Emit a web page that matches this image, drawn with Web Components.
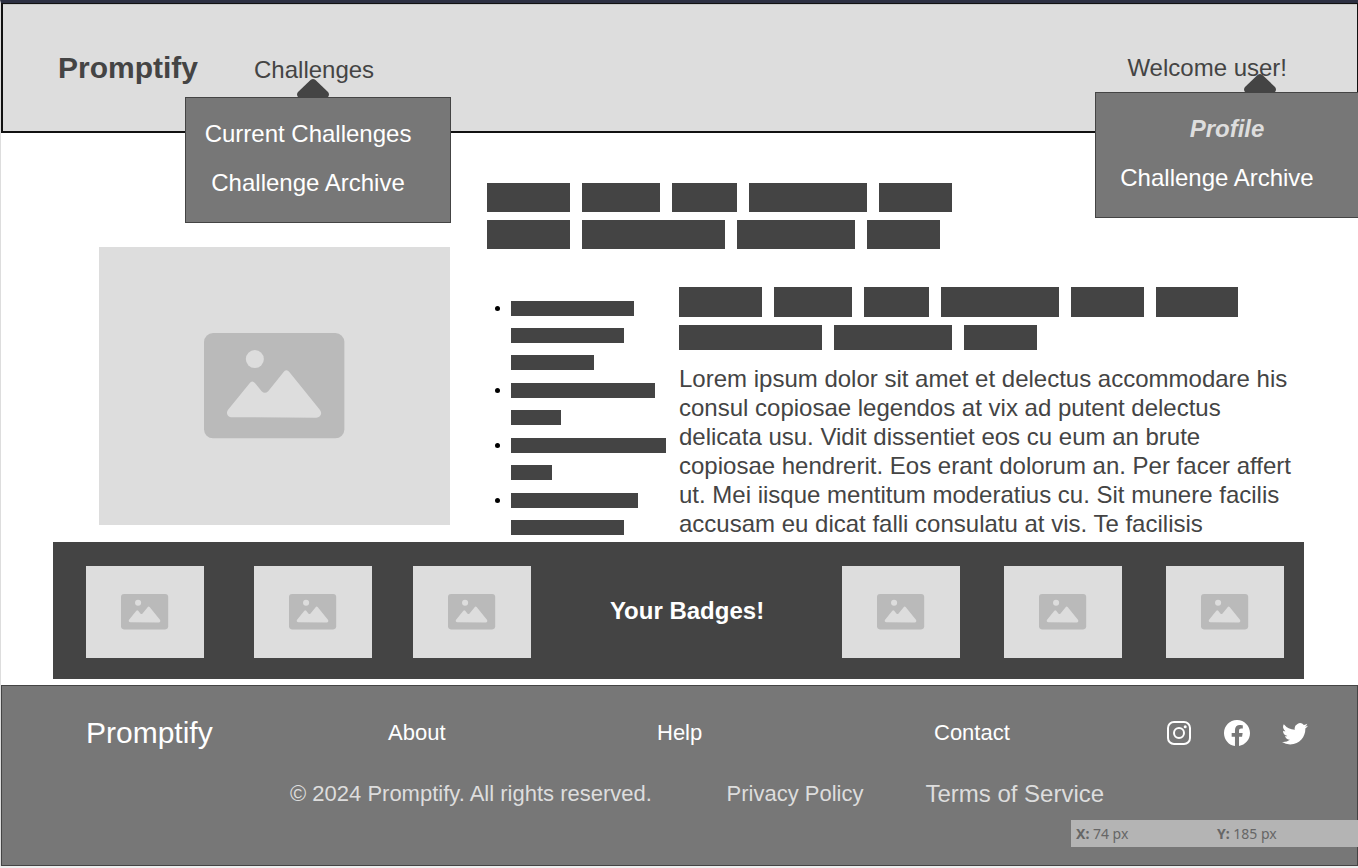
<!DOCTYPE html>
<html lang="en">
<head>
<meta charset="utf-8">
<meta name="viewport" content="width=device-width, initial-scale=1">
<title>Promptify</title>
<style>
  html { background: #eee; }
  body { margin: 0; font-family: "Liberation Sans", Arial, sans-serif; font-size: 24px; line-height: 29px; color: #444; }
</style>
</head>
<body>
<promptify-page></promptify-page>

<script>
const define = (name, markup, setup) => {
  const template = document.createElement('template');
  template.innerHTML = markup;
  customElements.define(name, class extends HTMLElement {
    constructor() {
      super();
      this.attachShadow({ mode: 'open' }).append(template.content.cloneNode(true));
    }
    connectedCallback() { if (setup) setup(this, this.shadowRoot); }
  });
};

/* Grey box with a picture glyph in its middle */
define('image-placeholder', `
  <style>
    :host { display: grid; place-items: center; background: #ddd; }
    svg { display: block; width: 40%; }
  </style>
  <svg viewBox="0 0 140 105" role="img" aria-label="Image placeholder">
    <rect width="140" height="105" rx="9" fill="#bababa"/>
    <circle cx="50.700" cy="26" r="9" fill="#ddd"/>
    <path fill="#ddd" d="M28 84C23.500 84 21.500 79.500 24 76.500L45.500 50Q48 46.500 51 50L57.500 58Q60.700 61 64 58L79 39.500Q82 35 85.500 39.500L115.500 76.500C118.500 80 116 84.500 112 84.500Z"/>
  </svg>`);

/* One row of blocked-out words; widths="83 78 65" */
define('word-row', `
  <style>
    :host { display: flex; gap: 12px; height: var(--bar, 29px); }
    span { background: #444; }
  </style>`,
  (host, root) => {
    for (const w of host.getAttribute('widths').split(' ')) {
      const bar = document.createElement('span');
      bar.style.width = w + 'px';
      root.append(bar);
    }
  });

/* Pop-up panel with a caret above it */
define('drop-menu', `
  <style>
    :host { display: block; position: absolute; box-sizing: border-box; border: 1px solid #444; background: #777; padding: 21px 0 25px; }
    svg { position: absolute; bottom: 100%; left: var(--caret); width: 32px; height: 18px; margin-bottom: 1px; }
    nav { display: grid; gap: 20px; justify-items: center; }
    ::slotted(a) { color: #fff; text-decoration: none; padding-right: 20px; white-space: nowrap; }
    ::slotted(a[aria-current]) { color: #ddd; font-weight: bold; font-style: italic; padding: 0; }
  </style>
  <svg viewBox="0 0 32 18" aria-hidden="true"><path fill="#444" d="M13.500 1Q16 -1 18.500 1L31 13Q33 15.500 31 18H1Q-1 15.500 1 13Z"/></svg>
  <nav><slot></slot></nav>`);

define('site-header', `
  <style>
    :host { display: block; position: relative; z-index: 1; box-sizing: border-box; height: 130px; padding: 49px 70px 0 55px; background: #ddd; border: 2px solid #111; border-width: 1px 1px 2px 2px; box-shadow: inset 0 1px #c8cac9; }
    .bar { display: flex; align-items: flex-start; justify-content: space-between; }
    .left { display: flex; align-items: baseline; gap: 56px; }
    .link { color: inherit; text-decoration: none; }
    .brand { font-size: 30px; font-weight: bold; }
    .item { position: relative; }
    .challenges { top: 42px; left: -69px; width: 266px; --caret: 111px; }
    .user { top: 88px; right: -1px; width: 263px; border-right: 0; --caret: 148px; }
  </style>
  <div class="bar">
    <div class="left">
      <a class="link brand" href="#">Promptify</a>
      <div class="item">
        <a class="link" href="#challenges">Challenges</a>
        <drop-menu class="challenges">
          <a href="#current">Current Challenges</a>
          <a href="#archive">Challenge Archive</a>
        </drop-menu>
      </div>
    </div>
    <a class="link" href="#user">Welcome user!</a>
  </div>
  <drop-menu class="user">
    <a href="#profile" aria-current="page">Profile</a>
    <a href="#archive">Challenge Archive</a>
  </drop-menu>`);

define('profile-panel', `
  <style>
    :host { display: grid; grid-template-columns: 351fr 817fr; gap: 37px; padding: 50px 54px 0 98px; }
    image-placeholder { margin-top: 64px; aspect-ratio: 351 / 278; align-self: start; }
    .title { display: grid; gap: 8px; }
    .columns { display: grid; grid-template-columns: 192px 1fr; margin-top: 38px; }
    ul { list-style: none; margin: 0; padding: 14px 0 0 24px; display: grid; gap: 13px; align-content: start; }
    li { position: relative; display: grid; gap: 12px; --bar: 15px; }
    li::before { content: ""; position: absolute; left: -16px; top: 5px; width: 5px; height: 5px; border-radius: 50%; background: #000; }
    .large { --bar: 30px; }
    .small { --bar: 25px; }
    p { margin: 14px 0 0; }
  </style>
  <image-placeholder></image-placeholder>
  <div>
    <div class="title">
      <word-row widths="83 78 65 118 73"></word-row>
      <word-row widths="83 143 118 73"></word-row>
    </div>
    <div class="columns">
      <ul>
        <li><word-row widths="123"></word-row><word-row widths="113"></word-row><word-row widths="83"></word-row></li>
        <li><word-row widths="144"></word-row><word-row widths="50"></word-row></li>
        <li><word-row widths="155"></word-row><word-row widths="41"></word-row></li>
        <li><word-row widths="127"></word-row><word-row widths="113"></word-row></li>
      </ul>
      <article>
        <div class="title">
          <word-row class="large" widths="83 78 65 118 73 82"></word-row>
          <word-row class="small" widths="143 118 73"></word-row>
        </div>
        <p>Lorem ipsum dolor sit amet et delectus accommodare his<br>
          consul copiosae legendos at vix ad putent delectus<br>
          delicata usu. Vidit dissentiet eos cu eum an brute<br>
          copiosae hendrerit. Eos erant dolorum an. Per facer affert<br>
          ut. Mei iisque mentitum moderatius cu. Sit munere facilis<br>
          accusam eu dicat falli consulatu at vis. Te facilisis</p>
      </article>
    </div>
  </div>`);

define('badge-strip', `
  <style>
    :host { display: grid; grid-template-columns: 168fr 159fr 119fr 310fr 162fr 162fr 118fr; align-items: center; margin: 4px 54px 6px 52px; padding: 24px 20px 21px 33px; background: #444; color: #fff; }
    image-placeholder { width: 118px; height: 92px; }
    h2 { margin: 0; padding-bottom: 4px; font-size: 24px; text-align: center; }
  </style>
  <image-placeholder></image-placeholder>
  <image-placeholder></image-placeholder>
  <image-placeholder></image-placeholder>
  <h2>Your Badges!</h2>
  <image-placeholder></image-placeholder>
  <image-placeholder></image-placeholder>
  <image-placeholder></image-placeholder>`);

define('site-footer', `
  <style>
    :host { display: block; position: relative; box-sizing: border-box; height: 181px; padding-top: 32px; border: 1px solid #444; background: #777; color: #fff; font-size: 22px; }
    a { color: inherit; text-decoration: none; }
    .links { display: grid; grid-template-columns: 302fr 269fr 277fr 232fr 142fr; align-items: center; padding: 0 49px 0 84px; }
    .brand { font-size: 30px; }
    .social { display: flex; gap: 32px; }
    .social svg { display: block; width: 26px; height: 26px; fill: #fff; }
    .legal { display: grid; grid-template-columns: 437fr 199fr 432fr; align-items: center; padding-left: 288px; margin-top: 32px; color: #ddd; }
    .terms { font-size: 24px; }
    .coords { position: absolute; right: -1px; top: 134px; width: 282px; height: 27px; padding-left: 5px; display: grid; grid-template-columns: 1fr 1fr; align-items: center; background: #b4b4b4; color: #666; font: 14px "Noto Sans", sans-serif; }
  </style>
  <div class="links">
    <a class="brand" href="#">Promptify</a>
    <a href="#about">About</a>
    <a href="#help">Help</a>
    <a href="#contact">Contact</a>
    <div class="social">
      <a href="#instagram" aria-label="Instagram"><svg viewBox="0 0 26 26"><rect x="2" y="2" width="22" height="22" rx="6" fill="none" stroke="#fff" stroke-width="2"/><circle cx="13" cy="13" r="5" fill="none" stroke="#fff" stroke-width="2"/><circle cx="19.200" cy="6.800" r="1.500"/></svg></a>
      <a href="#facebook" aria-label="Facebook"><svg viewBox="0 0 16 16"><path d="M16 8.049c0-4.446-3.582-8.050-8-8.050C3.580 0-.002 3.603-.002 8.050c0 4.017 2.926 7.347 6.750 7.951v-5.625h-2.030V8.050H6.750V6.275c0-2.017 1.195-3.131 3.022-3.131.876 0 1.791.157 1.791.157v1.980h-1.009c-.993 0-1.303.621-1.303 1.258v1.510h2.218l-.354 2.326H9.250V16c3.824-.604 6.750-3.934 6.750-7.951z"/></svg></a>
      <a href="#twitter" aria-label="Twitter"><svg viewBox="0 0 16 16"><path d="M5.026 15c6.038 0 9.341-5.003 9.341-9.334q.002-.211-.006-.422A6.700 6.700 0 0 0 16 3.542a6.700 6.700 0 0 1-1.889.518 3.300 3.300 0 0 0 1.447-1.817 6.500 6.500 0 0 1-2.087.793A3.286 3.286 0 0 0 7.875 6.030a9.320 9.320 0 0 1-6.767-3.429 3.290 3.290 0 0 0 1.018 4.382A3.300 3.300 0 0 1 .64 6.575v.045a3.290 3.290 0 0 0 2.632 3.218 3.200 3.200 0 0 1-.865.115 3 3 0 0 1-.614-.057 3.280 3.280 0 0 0 3.067 2.277A6.600 6.600 0 0 1 .78 13.580a6 6 0 0 1-.78-.045A9.340 9.340 0 0 0 5.026 15"/></svg></a>
    </div>
  </div>
  <div class="legal">
    <span>© 2024 Promptify. All rights reserved.</span>
    <a href="#privacy">Privacy Policy</a>
    <a class="terms" href="#terms">Terms of Service</a>
  </div>
  <div class="coords"><span><b>X:</b> 74 px</span><span><b>Y:</b> 185 px</span></div>`);

define('promptify-page', `
  <style>
    :host { display: block; background: #fff; border-top: 3px solid #2c3042; border-left: 1px solid #ddd; }
    main { display: block; }
  </style>
  <site-header></site-header>
  <main>
    <profile-panel></profile-panel>
    <badge-strip></badge-strip>
  </main>
  <site-footer></site-footer>`);
</script>
</body>
</html>
